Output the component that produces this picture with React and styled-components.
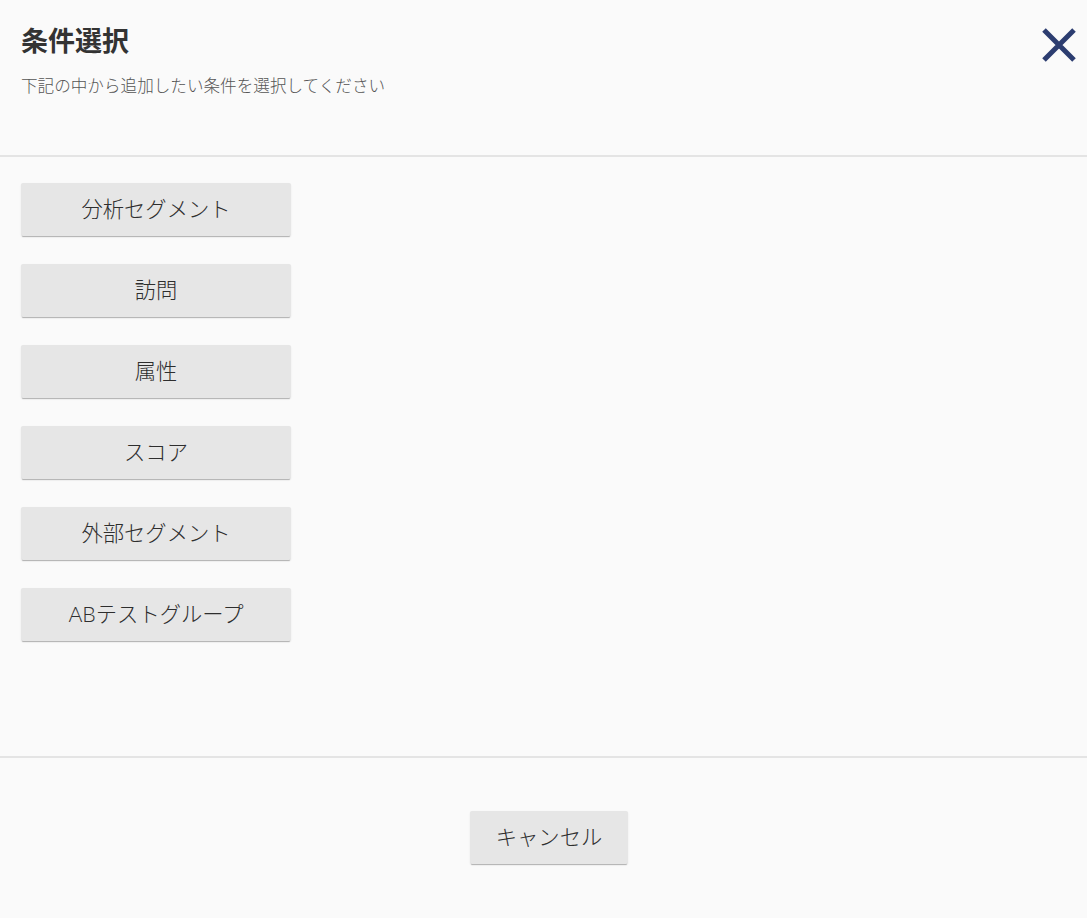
import React from "react";
import styled, { createGlobalStyle } from "styled-components";

const conditions = [
  "分析セグメント",
  "訪問",
  "属性",
  "スコア",
  "外部セグメント",
  "ABテストグループ",
];

const App = () => {
  return (
    <>
      <GlobalStyle />
      <Dialog>
        <Header>
          <Title>条件選択</Title>
          <Lead>下記の中から追加したい条件を選択してください</Lead>
          <CloseButton aria-label="閉じる">
            <svg width="36" height="36" viewBox="0 0 36 36">
              <path
                d="M3 3 L33 33 M33 3 L3 33"
                stroke="#2c3d70"
                strokeWidth="5"
                fill="none"
              />
            </svg>
          </CloseButton>
        </Header>
        <Body>
          {conditions.map((label) => (
            <OptionButton key={label}>{label}</OptionButton>
          ))}
        </Body>
        <Footer>
          <OptionButton $width="158px">キャンセル</OptionButton>
        </Footer>
      </Dialog>
    </>
  );
};

//styled
const GlobalStyle = createGlobalStyle`
  body{
    margin: 0;
    background: #fafafa;
    font-family: "Lato", "Noto Sans CJK JP", sans-serif;
  }
`;

const Dialog = styled.div`
  display: flex;
  flex-direction: column;
  height: 918px;
  background: #fafafa;
`;

//header
const Header = styled.div`
  position: relative;
  height: 157px;
  padding: 23px 21px 0 21px;
  box-sizing: border-box;
  border-bottom: 2px solid #e4e4e4;
`;

const Title = styled.h2`
  margin: 0;
  font-size: 27px;
  font-weight: 700;
  color: #333;
  line-height: 36px;
`;

const Lead = styled.p`
  margin: 16px 0 0 0;
  font-size: 16.6px;
  font-weight: 300;
  color: #555;
  line-height: 22px;
`;

const CloseButton = styled.button`
  position: absolute;
  top: 27px;
  right: 10px;
  padding: 0;
  border: none;
  background: none;
  line-height: 0;
  cursor: pointer;
`;

//content
const Body = styled.div`
  display: flex;
  flex-direction: column;
  align-items: flex-start;
  gap: 28px;
  height: 601px;
  padding: 26px 21px 0 21px;
  box-sizing: border-box;
  border-bottom: 2px solid #e4e4e4;
`;

const OptionButton = styled.button`
  width: ${(p) => p.$width || "270px"};
  height: 53px;
  padding: 0 0 4px 0;
  border: none;
  border-radius: 2px;
  background: #e6e6e6;
  box-shadow: 0 2px 1px -1px rgba(0, 0, 0, 0.25), 0 1px 2px rgba(0, 0, 0, 0.08);
  font-family: "Lato", "Noto Sans CJK JP", sans-serif;
  font-size: 21.3px;
  font-weight: 300;
  color: #2e2e2e;
  cursor: pointer;
`;

const Footer = styled.div`
  flex: 1;
  display: flex;
  justify-content: center;
  align-items: center;
  padding: 0 0 2px 11px;
`;

export default App;
